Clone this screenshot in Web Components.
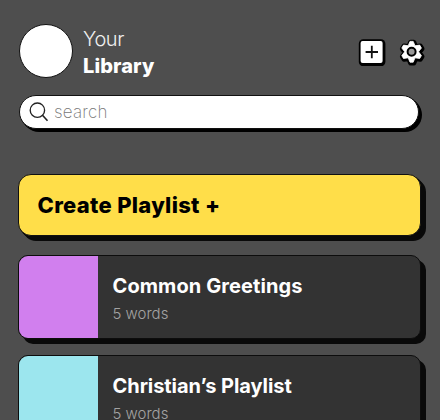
<!DOCTYPE html>
<html lang="en"><head><meta charset="utf-8"><title>Your Library</title>
<style>
html,body{margin:0;height:100%;overflow:hidden;background:#4e4e4e}
</style></head><body>
<library-app></library-app>
<script>
const define=(name,html)=>customElements.define(name,class extends HTMLElement{
  constructor(){
    super();
    const t=document.createElement('template');
    t.innerHTML=html;
    this.attachShadow({mode:'open'}).append(t.content.cloneNode(true));
  }
});

define('user-avatar',`<style>
:host{display:block;box-sizing:border-box;width:54px;height:54px;border-radius:50%;background:#fff;border:1px solid #111}
</style>`);

define('page-title',`<style>
:host{display:block;color:#fff;font-size:20px;line-height:27px;white-space:nowrap}
div{font-weight:300;color:#f0f0f0;letter-spacing:-.4px}
h1{margin:0;font-size:20px;font-weight:800;letter-spacing:.12px}
</style><div><slot name="first"></slot></div><h1><slot></slot></h1>`);

define('add-button',`<style>:host{display:block;width:28px;height:28px}svg{display:block}</style>
<svg width="28" height="28" viewBox="0 0 28 28">
<rect x=".8" y="1.3" width="26.6" height="27" rx="4.5" fill="#000"/>
<rect x="2.6" y="3" width="22" height="22" rx="2" fill="#fff"/>
<path d="M13.8 7.8v12.4M7.6 14h12.4" stroke="#111" stroke-width="1.8"/></svg>`);

const gear='M-1.6-10.4H1.6L3.4-6 8.1-6.7 9.8-3.8 6.9 0 9.8 3.8 8.1 6.7 3.4 6 1.6 10.4H-1.6L-3.4 6-8.1 6.7-9.8 3.8-6.9 0-9.8-3.8-8.1-6.7-3.4-6Z';
define('settings-button',`<style>:host{display:block;width:30px;height:30px}svg{display:block;overflow:visible}</style>
<svg width="30" height="30" viewBox="0 0 30 30">
<g transform="translate(15.6 14.8)" stroke-linejoin="round">
<path d="${gear}" fill="#000" stroke="#000" stroke-width="5" transform="translate(.6 .8)"/>
<path d="${gear}" fill="#fff" stroke="#fff" stroke-width=".8"/>
<circle r="4" fill="#999" stroke="#000" stroke-width="2"/>
</g></svg>`);

define('library-header',`<style>
:host{display:flex;align-items:flex-start;padding:24px 14px 0 19px}
page-title{margin:1.5px 0 0 10px;flex:1}
add-button{margin-top:13.5px}
settings-button{margin:13px 0 0 10px}
</style><user-avatar></user-avatar><page-title><span slot="first">Your</span>Library</page-title>
<add-button></add-button><settings-button></settings-button>`);

define('search-field',`<style>
:host{display:flex;align-items:center;box-sizing:border-box;height:34px;border-radius:17px;border:1px solid #111;background:#fff;box-shadow:1px 1px #000,2px 2px #000,3px 3px #000;padding-left:9px;color:#777;font-size:17px;font-weight:200;letter-spacing:.2px}
svg{margin-right:5px;flex:none}
</style><svg width="20" height="20" viewBox="0 0 20 20" fill="none" stroke="#222" stroke-width="1.35"><circle cx="8.4" cy="8.2" r="7.2"/><path d="M13.5 13.3l5 5.4" stroke-width="1.6"/></svg><slot></slot>`);

define('create-button',`<style>
:host{display:flex;align-items:center;box-sizing:border-box;height:62px;border-radius:13px;border:1px solid #111;background:#ffde49;box-shadow:1px 1px #090909,3px 3px #090909,5px 5px #090909;padding-left:18.5px;color:#000;font-size:22px;font-weight:800;letter-spacing:.3px;white-space:nowrap}
</style><slot></slot>`);

define('playlist-card',`<style>
:host{display:flex;box-sizing:border-box;height:84px;border-radius:10px;border:1px solid #0d0d0d;background:#333;box-shadow:5px 5px #090909;white-space:nowrap}
.swatch{width:79px;border-radius:9px 0 0 9px;background:var(--swatch);flex:none}
.text{padding:17px 0 0 14.5px}
h2{margin:0;font-size:20px;line-height:27px;font-weight:700;color:#fff;letter-spacing:var(--track,0)}
p{margin:3px 0 0;font-size:15px;line-height:22px;font-weight:300;color:#a3a3a3}
</style><div class="swatch"></div><div class="text"><h2><slot></slot></h2><p><slot name="count"></slot></p></div>`);

define('library-app',`<style>
:host{display:block;box-sizing:border-box;height:420px;overflow:hidden;background:#4e4e4e;font-family:Inter,"Liberation Sans",sans-serif}
library-header{height:55px}
search-field{margin:16px 21px 0 19px}
.list{display:flex;flex-direction:column;padding:45px 19px 0 18px}
playlist-card{margin-top:16px}
create-button{margin-bottom:3px}
</style><library-header></library-header><search-field>search</search-field>
<div class="list"><create-button>Create Playlist +</create-button>
<playlist-card style="--swatch:#d17fee;--track:.1px">Common Greetings<span slot="count">5 words</span></playlist-card>
<playlist-card style="--swatch:#9ce6ee;--track:-.06px">Christian’s Playlist<span slot="count">5 words</span></playlist-card></div>`);
</script></body></html>
